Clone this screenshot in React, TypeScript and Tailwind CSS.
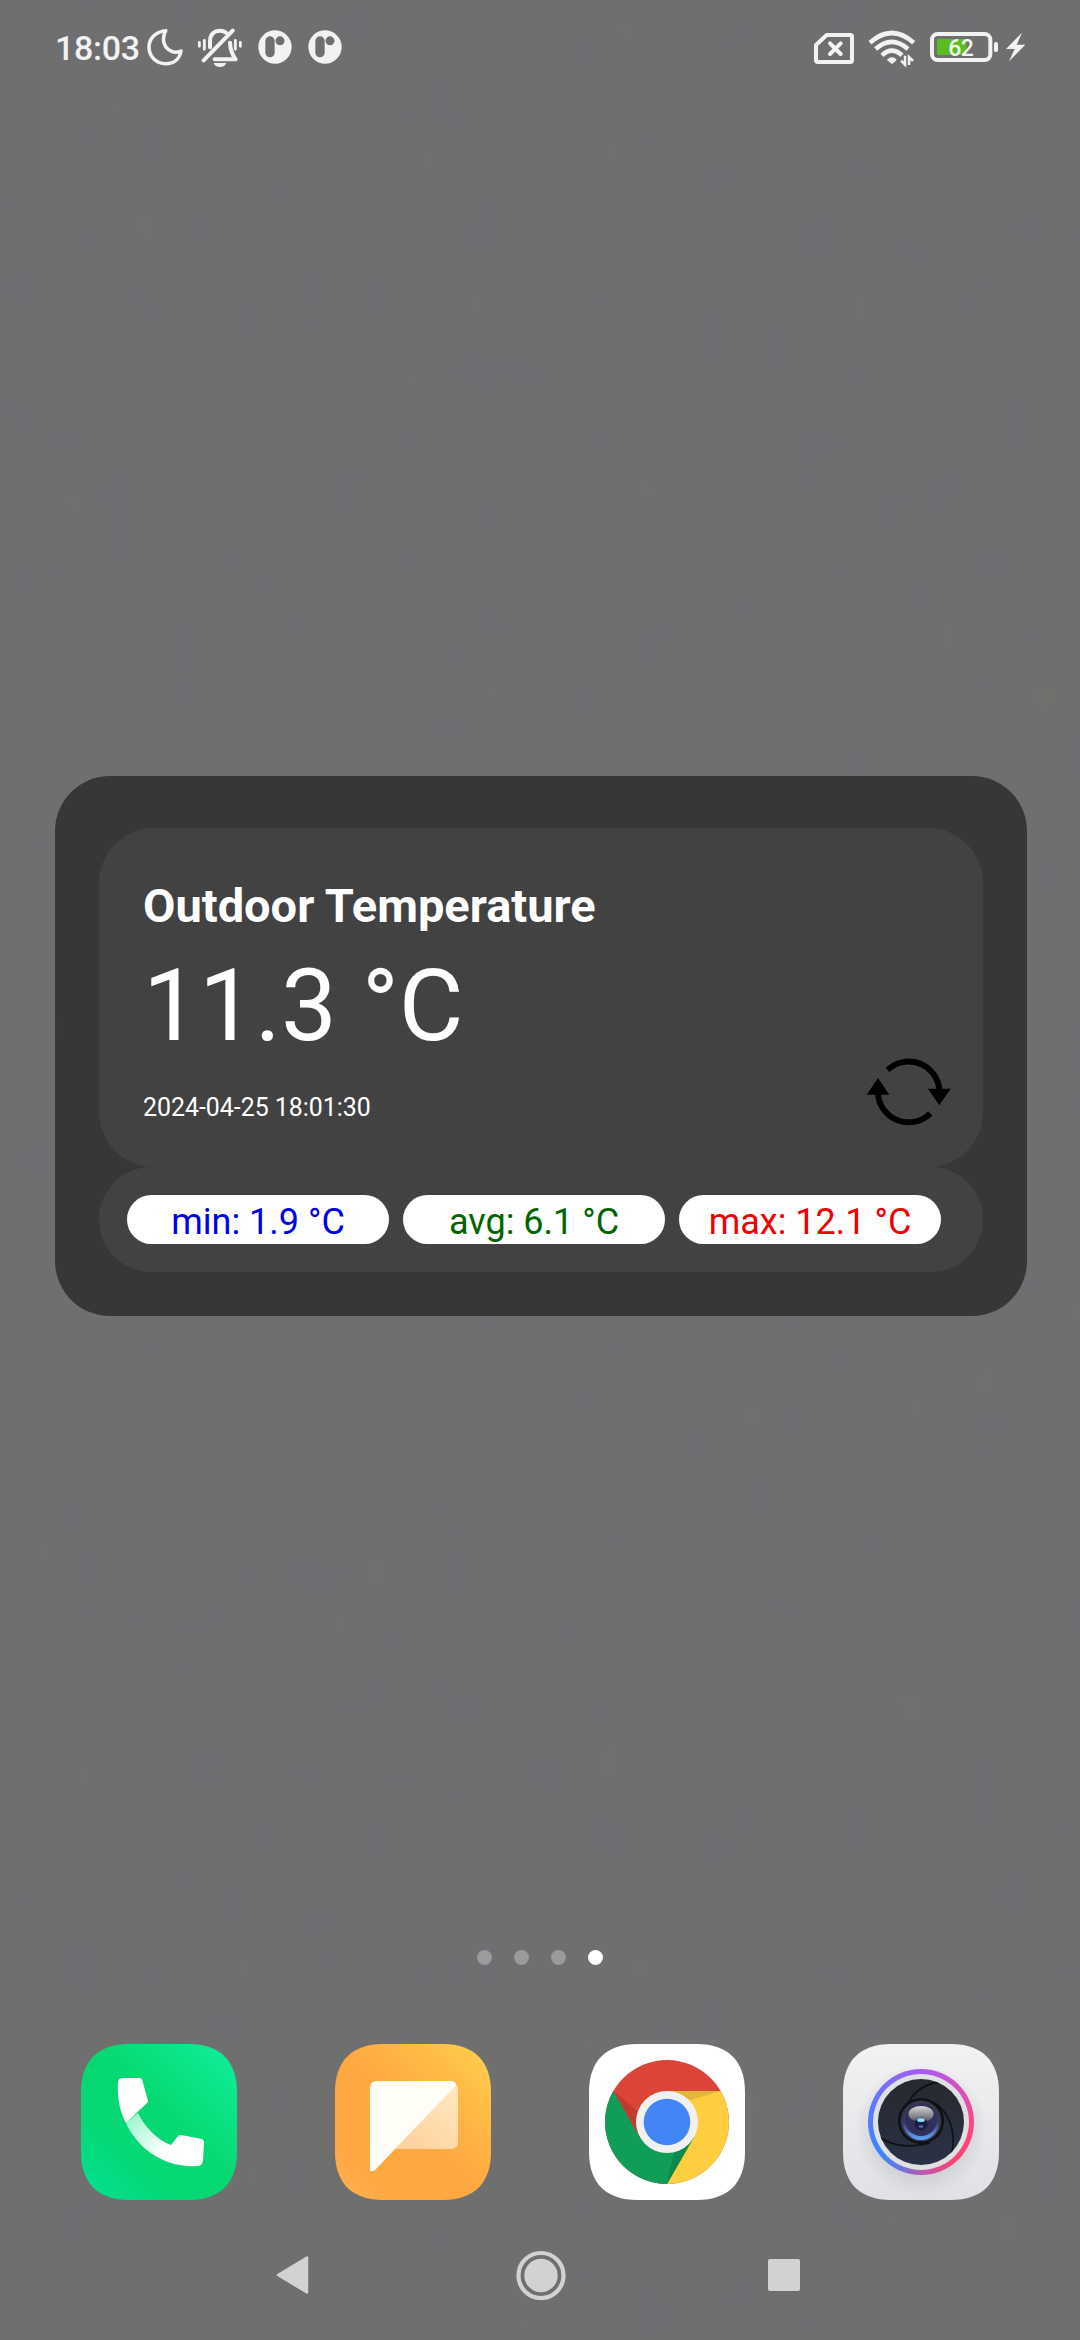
import type { ReactNode } from "react";

const SQUIRCLE =
  "M0 48C0 17 17 0 48 0H108C139 0 156 17 156 48V108C156 139 139 156 108 156H48C17 156 0 139 0 108Z";

function Wallpaper() {
  return (
    <svg className="absolute inset-0 h-[2340px] w-[1080px]" aria-hidden="true">
      <filter id="grain" x="0" y="0" width="100%" height="100%" colorInterpolationFilters="sRGB">
        <feTurbulence type="fractalNoise" baseFrequency="0.03 0.015" numOctaves="3" seed="4" />
        <feColorMatrix values="0.015 0 0 0 0.429  0.005 0 0 0 0.433  -0.024 0 0 0 0.451  0 0 0 0 1" />
      </filter>
      <rect width="1080" height="2340" filter="url(#grain)" />
    </svg>
  );
}

function StatusIcon({ viewBox, className, children }: { viewBox: string; className: string; children: ReactNode }) {
  return (
    <svg viewBox={viewBox} className={`h-10 shrink-0 ${className}`} fill="none">
      {children}
    </svg>
  );
}

function NotificationBadge({ className }: { className: string }) {
  return (
    <StatusIcon viewBox="654 54 102 120" className={`w-[34px] ${className}`}>
      <path
        fill="#f2f2f2"
        fillRule="evenodd"
        d="M705 61a50 50 0 1 1 0 100a50 50 0 1 1 0-100ZM690 79a14 14 0 0 0-14 14v35a14 14 0 0 0 28 0V93a14 14 0 0 0-14-14ZM720 79a13.500 13.500 0 1 0 0 27a13.500 13.500 0 1 0 0-27Z"
      />
    </StatusIcon>
  );
}

function StatusBar() {
  return (
    <header className="flex h-[96px] items-center pl-[55px] pr-[54px] text-[#f2f2f2]">
      <span className="w-[92px] text-[34px] leading-[40px] font-medium tracking-[-0.3px]">18:03</span>
      <StatusIcon viewBox="321 54 108 120" className="w-9">
        <path
          d="M377 62C345 65 327 87 327 112C327 140 349 161 377 161C401 161 419 147 423 123C414 127 404 128 395 124C371 114 364 88 377 62Z"
          stroke="#f2f2f2"
          strokeWidth="10.500"
          strokeLinejoin="round"
        />
      </StatusIcon>
      <StatusIcon viewBox="471 54 138 120" className="ml-[14px] w-[46px]">
        <g stroke="#f2f2f2" strokeWidth="12" strokeLinecap="round" strokeLinejoin="round">
          <path d="M510 112V94C510 74 522 62 540 62C547 62 553 64 558 68M570 98C571 124 578 136 587 148H524" />
          <path d="M578 62L491 151" />
        </g>
        <g stroke="#f2f2f2" strokeWidth="8.500" strokeLinecap="round">
          <path d="M478 97V109M493 91V118M586 91V118M601 97V109" />
        </g>
        <path d="M521 159H559C556 167 549 171 540 171S524 167 521 159Z" fill="#f2f2f2" />
      </StatusIcon>
      <NotificationBadge className="ml-[15px]" />
      <NotificationBadge className="ml-[16px]" />
      <div className="grow" />
      <StatusIcon viewBox="69 54 126 120" className="w-[42px]">
        <path d="M110 75H181Q186 75 186 80V150Q186 156 181 156H84Q78 156 78 150V105Z" stroke="#f2f2f2" strokeWidth="12" strokeLinejoin="round" />
        <path d="M120 100L152 132M152 100L120 132" stroke="#f2f2f2" strokeWidth="12" strokeLinecap="round" />
      </StatusIcon>
      <StatusIcon viewBox="234 54 144 120" className="ml-[13px] w-12">
        <g stroke="#f2f2f2" strokeWidth="14">
          <path d="M240 98Q305 40 371 98" />
          <path d="M257 117Q305 74 354 117" />
          <path d="M276 136Q305 108 336 136" />
        </g>
        <path d="M291 149Q306 135 320 149Q319 152 306 162Q293 152 291 149Z" fill="#f2f2f2" />
        <g stroke="#f2f2f2" strokeWidth="7.500">
          <path d="M345 137V164L333 152M357 165V141L369 153" />
        </g>
      </StatusIcon>
      <StatusIcon viewBox="417 54 210 120" className="ml-[13px] w-[70px]">
        <rect x="426" y="72" width="175" height="78" rx="17" stroke="#f2f2f2" strokeWidth="12" />
        <path d="M447 87H530V135H447Q441 135 441 129V93Q441 87 447 87Z" fill="#5bbd1e" />
        <rect x="612" y="96" width="12" height="30" rx="5" fill="#f2f2f2" />
        <text x="475" y="137" fill="#f2f2f2" className="text-[69px] font-medium tracking-[-2px]">
          62
        </text>
      </StatusIcon>
      <StatusIcon viewBox="645 54 63 120" className="ml-[6px] w-[21px]">
        <path d="M696 68L648 117H674L657 154L706 104H680Z" fill="#f2f2f2" />
      </StatusIcon>
    </header>
  );
}

function RefreshIcon() {
  return (
    <svg viewBox="798 110 255 216" className="h-[72px] w-[85px]" fill="none">
      <path d="M863 152A92 92 0 0 1 1018 212M991 282A92 92 0 0 1 834 222" stroke="#000" strokeWidth="18" />
      <path d="M834 176L868 226H800ZM1018 258L984 208H1052Z" fill="#000" />
    </svg>
  );
}

function Pill({ className, children }: { className: string; children: ReactNode }) {
  return (
    <div className={`h-[49px] w-[262px] rounded-full bg-white pt-[5px] text-center text-[36px] leading-[44px] ${className}`}>
      {children}
    </div>
  );
}

function TemperatureWidget() {
  return (
    <section className="mt-[680px] ml-[55px] h-[540px] w-[972px] rounded-[55px] bg-black/50 px-11 pt-[52px] text-white">
      <div className="flex h-[339px] items-end justify-between rounded-[55px] bg-[#424242] pl-11 pr-[32px]">
        <div className="h-[289px]">
          <h1 className="text-[47px] leading-[56px] font-bold">Outdoor Temperature</h1>
          <p className="mt-[14px] text-[99.5px] leading-[116px]">11.3 °C</p>
          <p className="mt-[28px] text-[24.9px] leading-[31px]">2024-04-25 18:01:30</p>
        </div>
        <div className="mb-[39px]">
          <RefreshIcon />
        </div>
      </div>
      <div className="flex h-[105px] gap-[14px] rounded-[52px] bg-[#424242] pt-7 pl-7">
        <Pill className="text-[#0000e6]">min: 1.9 °C</Pill>
        <Pill className="text-[#006400]">avg: 6.1 °C</Pill>
        <Pill className="text-[#f00000]">max: 12.1 °C</Pill>
      </div>
    </section>
  );
}

function PageDots() {
  return (
    <div className="mt-[634px] flex justify-center gap-[22px]">
      <span className="size-[15px] rounded-full bg-[#9b9b9b]" />
      <span className="size-[15px] rounded-full bg-[#9b9b9b]" />
      <span className="size-[15px] rounded-full bg-[#9b9b9b]" />
      <span className="size-[15px] rounded-full bg-white" />
    </div>
  );
}

function PhoneIcon() {
  return (
    <svg viewBox="0 0 156 156" className="size-[156px]">
      <defs>
        <linearGradient id="phoneBg" x1="0" y1="1" x2="1" y2="0">
          <stop offset="0" stopColor="#04e294" />
          <stop offset="0.3" stopColor="#05d875" />
          <stop offset="0.55" stopColor="#06d972" />
          <stop offset="1" stopColor="#10f09c" />
        </linearGradient>
        <linearGradient id="phoneArm" x1="48" y1="74" x2="82" y2="108" gradientUnits="userSpaceOnUse">
          <stop offset="0" stopColor="#9cf5cf" />
          <stop offset="1" stopColor="#ffffff" />
        </linearGradient>
      </defs>
      <path d={SQUIRCLE} fill="url(#phoneBg)" />
      <path d="M45 79L57 69C63 82 76 96 90 101L97 92Q98 91 100 91L121 95Q123 96 123 98L122 117Q121 122 116 122C83 124 56 104 45 79Z" fill="url(#phoneArm)" />
      <path d="M37 39Q37 34 42 34H58Q61 34 61.500 37L67 57Q67 58 66 59L45 79C39 68 36 54 37 39Z" fill="#fff" />
    </svg>
  );
}

function MessagesIcon() {
  return (
    <svg viewBox="0 0 156 156" className="size-[156px]">
      <defs>
        <linearGradient id="msgBg" x1="0" y1="1" x2="1" y2="0">
          <stop offset="0" stopColor="#ffb04f" />
          <stop offset="0.25" stopColor="#ffa640" />
          <stop offset="0.5" stopColor="#ffa942" />
          <stop offset="0.75" stopColor="#ffba45" />
          <stop offset="1" stopColor="#ffd24f" />
        </linearGradient>
        <linearGradient id="msgFold" x1="1" y1="0.2" x2="0.4" y2="1">
          <stop offset="0" stopColor="#ffe6bd" />
          <stop offset="1" stopColor="#ffd3a0" />
        </linearGradient>
      </defs>
      <path d={SQUIRCLE} fill="url(#msgBg)" />
      <path d="M60 105L121 41Q123 42 123 45V98Q123 105 116 105Z" fill="url(#msgFold)" />
      <path d="M35 44Q35 37 42 37H115Q120 37 121.500 41L40 126Q38 128 35 127Z" fill="#fffdf6" />
    </svg>
  );
}

function ChromeIcon() {
  return (
    <svg viewBox="0 0 156 156" className="size-[156px]">
      <path d={SQUIRCLE} fill="#fff" />
      <circle cx="78" cy="78" r="62" fill="#db4437" />
      <path d="M24.300 47A62 62 0 0 0 78 140L104.800 93.500L78 78L51.200 93.500Z" fill="#0f9d58" />
      <path d="M131.700 47A62 62 0 0 1 78 140L104.800 93.500L78 78V47Z" fill="#ffcd40" />
      <path d="M24.300 47L49 90L52 70Z" fill="#c13b30" />
      <path d="M78 47H131.700L101 56Z" fill="#e2b63b" />
      <path d="M78 140L104.800 93.500L85 108Z" fill="#0c8a4c" />
      <circle cx="78" cy="78" r="31" fill="#f1f1f1" />
      <circle cx="78" cy="78" r="23.300" fill="#4285f4" />
    </svg>
  );
}

function CameraIcon() {
  return (
    <svg viewBox="0 0 156 156" className="size-[156px]">
      <defs>
        <linearGradient id="camBg" x1="0" y1="0" x2="0" y2="1">
          <stop offset="0" stopColor="#f1f2f3" />
          <stop offset="1" stopColor="#dfe1e4" />
        </linearGradient>
        <radialGradient id="camShade">
          <stop offset="0.6" stopColor="#b4b6ba" />
          <stop offset="1" stopColor="#b4b6ba" stopOpacity="0" />
        </radialGradient>
        <linearGradient id="camBlades" x1="0" y1="0" x2="0.2" y2="1">
          <stop offset="0" stopColor="#26282c" />
          <stop offset="1" stopColor="#2b3145" />
        </linearGradient>
        <linearGradient id="camGlass" x1="0" y1="0" x2="0" y2="1">
          <stop offset="0" stopColor="#3a3a40" />
          <stop offset="0.5" stopColor="#3a3a6e" />
          <stop offset="1" stopColor="#62a8ff" />
        </linearGradient>
        <linearGradient id="camShine" x1="0" y1="0" x2="0" y2="1">
          <stop offset="0" stopColor="#d8d8da" />
          <stop offset="1" stopColor="#55555c" />
        </linearGradient>
        <clipPath id="camClip">
          <circle cx="78" cy="78" r="43" />
        </clipPath>
      </defs>
      <path d={SQUIRCLE} fill="url(#camBg)" />
      <circle cx="78" cy="86" r="66" fill="url(#camShade)" opacity="0.5" />
      <foreignObject x="25" y="25" width="106" height="106">
        <div className="size-[106px] rounded-full bg-[conic-gradient(#a55cf5,#d94fc0_50deg,#ff4485_90deg,#ff4170_140deg,#b55bb0_180deg,#6878e0_205deg,#3b86ff_235deg,#5b79ff_285deg,#a55cf5)] p-[5px]">
          <div className="size-24 rounded-full bg-[#dfe0e2]" />
        </div>
      </foreignObject>
      <circle cx="78" cy="78" r="43" fill="url(#camBlades)" />
      <g clipPath="url(#camClip)" fill="none" stroke="#111216" strokeWidth="1.800">
        <path d="M64 62C69 49 80 41 95 38" />
        <path d="M92 59C107 70 113 88 109 108" />
        <path d="M36 93C47 101 67 105 87 99" />
      </g>
      <circle cx="78" cy="77" r="23" fill="#0f1014" />
      <circle cx="78" cy="77" r="20.500" fill="#34364a" />
      <circle cx="78" cy="78" r="18" fill="url(#camGlass)" />
      <circle cx="78" cy="76" r="16" fill="#312f5c" />
      <ellipse cx="78" cy="70" rx="12.500" ry="8" fill="url(#camShine)" />
      <circle cx="78" cy="80" r="6.500" fill="#1b1d3d" />
      <ellipse cx="78" cy="76" rx="4" ry="2" fill="#8fd4ff" />
      <ellipse cx="78" cy="82.500" rx="2.500" ry="1.200" fill="#5368c8" />
    </svg>
  );
}

function Dock() {
  return (
    <div className="mt-[79px] flex gap-[98px] pl-[81px]">
      <PhoneIcon />
      <MessagesIcon />
      <ChromeIcon />
      <CameraIcon />
    </div>
  );
}

function NavigationBar() {
  return (
    <nav className="mt-[50px] flex h-[50px] items-center pl-[275px]">
      <svg viewBox="0 0 36 44" className="h-11 w-9">
        <path d="M3 22L32 4.500V39.500Z" fill="#d2d2d2" stroke="#d2d2d2" strokeWidth="2.500" strokeLinejoin="round" />
      </svg>
      <svg viewBox="0 0 50 50" className="ml-[204.500px] size-[50px]" fill="none">
        <circle cx="25" cy="25.500" r="22.500" stroke="#d2d2d2" strokeWidth="4.200" />
        <circle cx="25" cy="25.500" r="16.700" fill="#d2d2d2" />
      </svg>
      <div className="ml-[202.500px] size-8 rounded-[2px] bg-[#d2d2d2]" />
    </nav>
  );
}

export default function App() {
  return (
    <main className="relative h-[2340px] w-[1080px] overflow-hidden bg-[#6f6f70] font-[Roboto,sans-serif]">
      <Wallpaper />
      <div className="relative">
        <StatusBar />
        <TemperatureWidget />
        <PageDots />
        <Dock />
        <NavigationBar />
      </div>
    </main>
  );
}
